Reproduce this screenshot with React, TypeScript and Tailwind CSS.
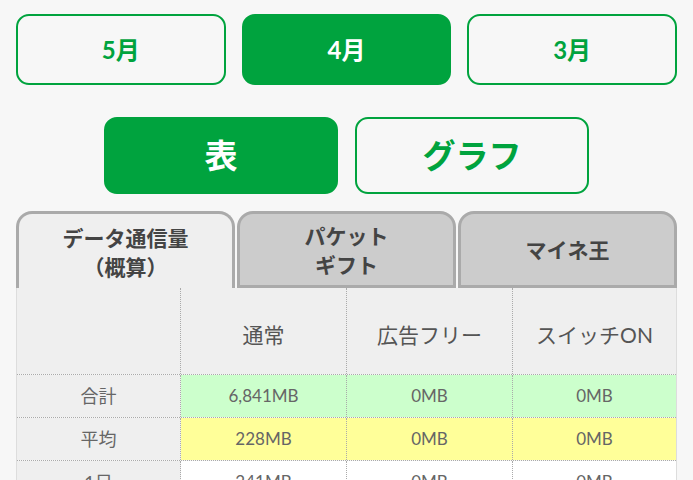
import { clsx } from "clsx";

const months = [
  { label: "5月", active: false },
  { label: "4月", active: true },
  { label: "3月", active: false },
];

const tabs = [
  { lines: ["データ通信量", "（概算）"], active: true },
  { lines: ["パケット", "ギフト"], active: false },
  { lines: ["マイネ王"], active: false },
];

const rows = [
  { label: "合計", values: ["6,841MB", "0MB", "0MB"], bg: "bg-[#ccffcc]" },
  { label: "平均", values: ["228MB", "0MB", "0MB"], bg: "bg-[#ffff99]" },
  { label: "1日", values: ["241MB", "0MB", "0MB"], bg: "bg-white" },
];

const font = "font-['Lato','Noto_Sans_CJK_JP',sans-serif]";

export default function App() {
  return (
    <div className={clsx("min-h-[480px] bg-[#f7f7f7] px-4 pt-[14px] overflow-hidden", font)}>
      {/* Month selector */}
      <div className="grid grid-cols-3 gap-4">
        {months.map((m) => (
          <button
            key={m.label}
            className={clsx(
              "h-[71px] rounded-[13px] border-2 border-[#00a33e] text-[24px] font-bold",
              m.active ? "bg-[#00a33e] text-white" : "bg-[#f7f7f7] text-[#00a33e]",
            )}
          >
            {m.label}
          </button>
        ))}
      </div>

      {/* View toggle */}
      <div className="mt-[32px] flex justify-center gap-[17px]">
        <button className="h-[77px] w-[234px] rounded-[13px] border-2 border-[#00a33e] bg-[#00a33e] text-[33px] font-bold text-white">
          表
        </button>
        <button className="h-[77px] w-[234px] rounded-[13px] border-2 border-[#00a33e] bg-[#f7f7f7] text-[33px] font-bold text-[#00a33e]">
          グラフ
        </button>
      </div>

      {/* Tabs */}
      <div className="mt-[17px] grid grid-cols-3 gap-[2px]">
        {tabs.map((t) => (
          <div
            key={t.lines[0]}
            className={clsx(
              "flex h-[77px] flex-col items-center justify-center rounded-t-[16px] border-[3px] border-[#aaaaaa] text-[21px] font-bold leading-[29px] text-[#444]",
              t.active ? "border-b-0 bg-[#efefef] pt-[1px]" : "bg-[#cccccc]",
            )}
          >
            {t.lines.map((l) => (
              <span key={l}>{l}</span>
            ))}
          </div>
        ))}
      </div>

      {/* Table */}
      <div className="border-x border-[#dddddd] text-[#666]">
        <div className="grid h-[86px] grid-cols-[164px_166px_166px_1fr] bg-[#efefef] text-[21px] text-[#555]">
          <div className="border-r border-dotted border-[#aaaaaa]" />
          <div className="flex items-center justify-center border-r border-dotted border-[#aaaaaa] pt-2">通常</div>
          <div className="flex items-center justify-center border-r border-dotted border-[#aaaaaa] pt-2">広告フリー</div>
          <div className="flex items-center justify-center pt-2">スイッチON</div>
        </div>
        {rows.map((r) => (
          <div
            key={r.label}
            className="grid h-[43px] grid-cols-[164px_166px_166px_1fr] border-t border-dotted border-[#aaaaaa] text-[17px]"
          >
            <div className="flex items-center justify-center border-r border-dotted border-[#aaaaaa] bg-[#efefef] text-[18px]">
              {r.label}
            </div>
            {r.values.map((v, i) => (
              <div
                key={i}
                className={clsx(
                  "flex items-center justify-center",
                  r.bg,
                  i < 2 && "border-r border-dotted border-[#aaaaaa]",
                )}
              >
                {v}
              </div>
            ))}
          </div>
        ))}
      </div>
    </div>
  );
}
